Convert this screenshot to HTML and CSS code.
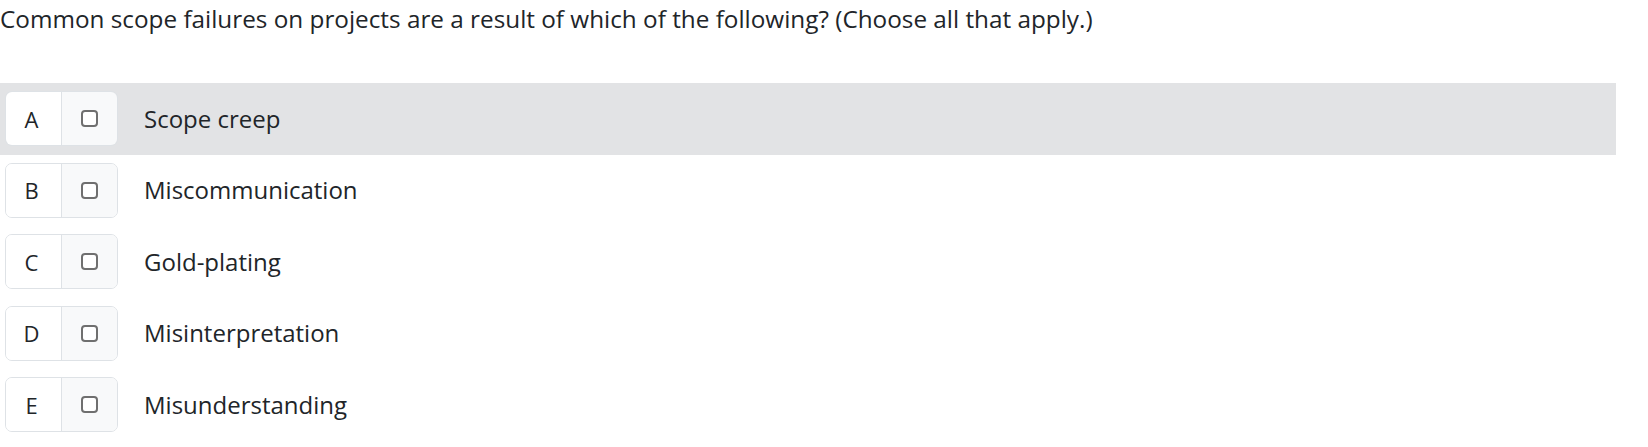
FILE: index.html
```html
<!DOCTYPE html>
<html>
<head>
<meta charset="utf-8">
<link rel="stylesheet" href="styles.css">
</head>
<body>
<div class="question">
  <p class="prompt">Common scope failures on projects are a result of which of the following? (Choose all that apply.)</p>
  <ul class="options">
    <li class="option is-hover">
      <span class="badge"><span class="letter">A</span><span class="check"><span class="box"></span></span></span>
      <span class="label">Scope creep</span>
    </li>
    <li class="option">
      <span class="badge"><span class="letter">B</span><span class="check"><span class="box"></span></span></span>
      <span class="label">Miscommunication</span>
    </li>
    <li class="option">
      <span class="badge"><span class="letter">C</span><span class="check"><span class="box"></span></span></span>
      <span class="label">Gold-plating</span>
    </li>
    <li class="option">
      <span class="badge"><span class="letter">D</span><span class="check"><span class="box"></span></span></span>
      <span class="label">Misinterpretation</span>
    </li>
    <li class="option">
      <span class="badge"><span class="letter">E</span><span class="check"><span class="box"></span></span></span>
      <span class="label">Misunderstanding</span>
    </li>
  </ul>
</div>
</body>
</html>
```
FILE: styles.css
```css
html, body {
  margin: 0;
  padding: 0;
  background: #ffffff;
}
body {
  font-family: "Open Sans", "Noto Sans", sans-serif;
  color: #212529;
}
.question {
  width: 1616px;
}
.prompt {
  margin: 0;
  padding-top: 3px;
  font-size: 24.3px;
  line-height: 32px;
  white-space: nowrap;
}
.options {
  list-style: none;
  margin: 48px 0 0 0;
  padding: 0;
}
.option {
  display: flex;
  align-items: center;
  padding: 8.25px 0 8.25px 5px;
}
.option.is-hover {
  background: #e2e3e5;
}
.badge {
  display: flex;
  width: 113px;
  height: 55px;
  box-sizing: border-box;
  border: 1px solid #dee2e6;
  border-radius: 7px;
  overflow: hidden;
  flex: none;
}
.letter {
  width: 56px;
  display: flex;
  align-items: center;
  justify-content: center;
  padding-right: 4px;
  box-sizing: border-box;
  background: #ffffff;
  border-right: 1px solid #dee2e6;
  font-size: 22px;
  color: #212529;
}
.check {
  flex: 1;
  display: flex;
  align-items: center;
  justify-content: center;
  background: #f8f9fa;
}
.box {
  width: 17px;
  height: 17px;
  box-sizing: border-box;
  border: 2px solid #6f6f6f;
  border-radius: 4px;
  background: #ffffff;
}
.label {
  margin-left: 26px;
  font-size: 24px;
  line-height: 32px;
  color: #212529;
}
```
